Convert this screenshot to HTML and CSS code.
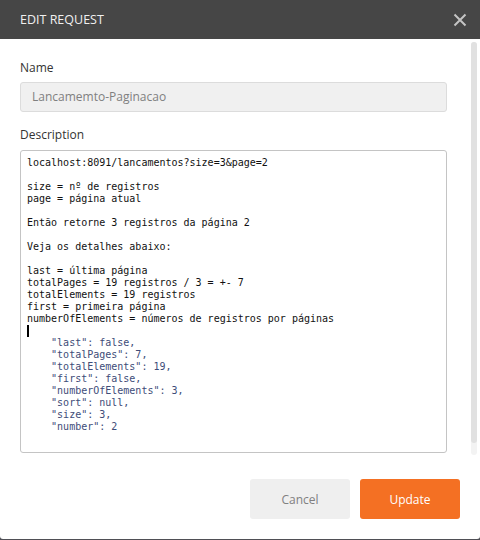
FILE: index.html
```html
<!DOCTYPE html>
<html>
<head>
<meta charset="utf-8">
<link rel="stylesheet" href="styles.css">
</head>
<body>
<div class="modal">
  <div class="header">
    <span class="title">EDIT REQUEST</span>
    <svg class="close" width="14" height="14" viewBox="0 0 14 14"><path d="M1.5 1.5 L12.5 12.5 M12.5 1.5 L1.5 12.5" stroke="#c4c4c4" stroke-width="2" fill="none"/></svg>
  </div>
  <div class="body">
    <label class="label">Name</label>
    <div class="input">Lancamemto-Paginacao</div>
    <label class="label desc-label">Description</label>
    <div class="textarea"><div class="code">localhost:8091/lancamentos?size=3&amp;page=2

size = nº de registros
page = página atual

Então retorne 3 registros da página 2

Veja os detalhes abaixo:

last = última página
totalPages = 19 registros / 3 = +- 7
totalElements = 19 registros
first = primeira página
numberOfElements = números de registros por páginas
<span class="cursor"></span>
<span class="json">    "last": false,
    "totalPages": 7,
    "totalElements": 19,
    "first": false,
    "numberOfElements": 3,
    "sort": null,
    "size": 3,
    "number": 2</span></div></div>
    <div class="footer">
      <button class="btn cancel">Cancel</button>
      <button class="btn update">Update</button>
    </div>
  </div>
  <div class="scrollbar"><div class="thumb"></div></div>
</div>
</body>
</html>
```
FILE: styles.css
```css
html, body {
  margin: 0;
  padding: 0;
}
body {
  background: #4f4f55;
  width: 480px;
  height: 540px;
  overflow: hidden;
  font-family: "Open Sans", sans-serif;
}
.modal {
  position: relative;
  width: 480px;
  height: 539px;
  background: #fff;
  border-radius: 0 0 3px 3px;
  overflow: hidden;
}
.header {
  height: 39px;
  background: #464646;
  display: flex;
  align-items: center;
  justify-content: space-between;
  padding: 0 13px 0 20px;
}
.title {
  color: #f0f0f0;
  font-size: 12.5px;
}
.close {
  display: block;
}
.body {
  padding: 20px 33px 0 20px;
  display: flex;
  flex-direction: column;
}
.label {
  font-size: 12px;
  color: #333;
  line-height: 18px;
  margin-bottom: 5px;
}
.desc-label {
  margin-top: 14px;
  margin-bottom: 6px;
}
.input {
  height: 28px;
  border: 1px solid #dcdcdc;
  border-radius: 3px;
  background: #f0f0f0;
  color: #808080;
  font-size: 12px;
  line-height: 28px;
  padding-left: 11px;
}
.textarea {
  border: 1px solid #c4c4c4;
  border-radius: 3px;
  padding: 6px 6px 0 6px;
  box-sizing: border-box;
  height: 303px;
}
.code {
  font-family: "DejaVu Sans Mono", monospace;
  font-size: 10px;
  line-height: 12px;
  white-space: pre;
  color: #111;
}
.json {
  color: #3e4c78;
}
.cursor {
  display: inline-block;
  width: 2px;
  height: 12px;
  background: #000;
  vertical-align: top;
}
.footer {
  display: flex;
  justify-content: flex-end;
  gap: 10px;
  margin-top: 26px;
  margin-right: -13px;
}
.btn {
  width: 100px;
  height: 40px;
  border: none;
  border-radius: 3px;
  font-family: "Open Sans", sans-serif;
  font-size: 12px;
}
.cancel {
  background: #efefef;
  color: #808080;
}
.update {
  background: #f47023;
  color: #fff;
}
.scrollbar {
  position: absolute;
  left: 471px;
  top: 42px;
  width: 6px;
  height: 413px;
  background: #f3f3f3;
  border-radius: 3px;
}
.thumb {
  height: 401px;
  background: #e1e1e1;
  border-radius: 3px;
}
```
